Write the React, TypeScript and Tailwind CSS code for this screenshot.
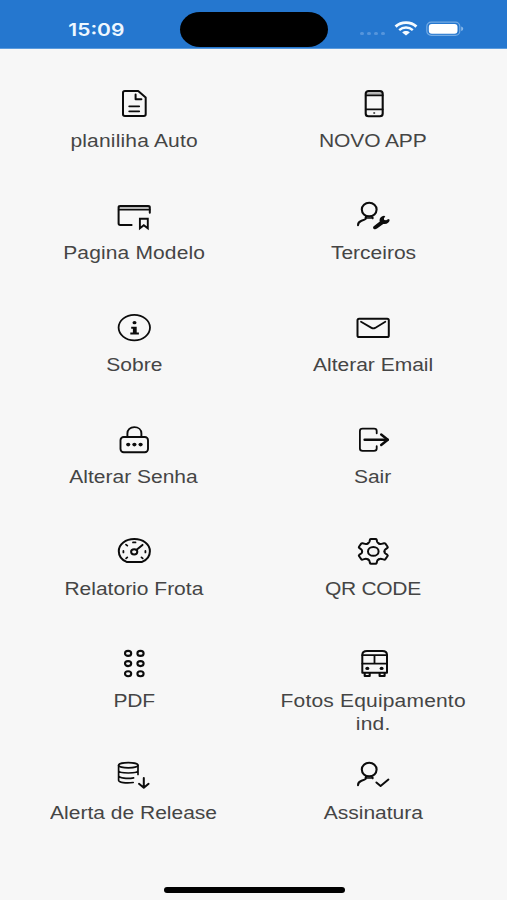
import type { ReactNode } from "react";

type MenuItem = {
  lines: string[];
  tracking?: string;
  icon: ReactNode;
};

function Icon({ children }: { children: ReactNode }) {
  return (
    <svg
      viewBox="0 0 40 36"
      className="h-9 w-10 shrink-0 overflow-visible"
      fill="none"
      stroke="#0c0c0c"
      strokeWidth={2}
      strokeLinecap="round"
      strokeLinejoin="round"
    >
      {children}
    </svg>
  );
}

function UserShape() {
  return (
    <>
      <ellipse cx="16.2" cy="11.6" rx="7.4" ry="6.8" strokeWidth={2.1} />
      <path d="M13 18.6v1.4c0 .9-.6 1.3-1.5 1.6l-3 1.1C6 23.6 5 24.8 5 27.2" />
      <path d="M12.4 19.4Q16.2 20.6 19.8 19.4V20.6" strokeWidth={1.6} />
    </>
  );
}

const gearAngles = [0, 60, 120, 180, 240, 300];

const items: MenuItem[] = [
  {
    lines: ["planiliha Auto"],
    tracking: "tracking-[0.15px]",
    icon: (
      <>
        <path d="M10.9 5H24.2L31.7 11.4V28.3Q31.7 30 29.8 30H10.9Q9 30 9 28.3V6.7Q9 5 10.9 5Z" />
        <path d="M21.6 8.5V13.3H27.4" />
        <path d="M15.2 20.3H25.2M15.2 25.3H25.2" strokeWidth={1.8} />
      </>
    ),
  },
  {
    lines: ["NOVO APP"],
    tracking: "tracking-[-0.1px]",
    icon: (
      <>
        <path d="M13.2 7.4H29.2" stroke="#b5b5b5" strokeWidth={2.6} strokeLinecap="butt" />
        <rect x="12.7" y="5" width="17" height="25.2" rx="2.8" strokeWidth={2.1} />
        <path d="M12.7 9.4H29.7M12.7 23.4H29.7" strokeWidth={1.6} />
        <ellipse cx="21.2" cy="27" rx="1.1" ry=".8" fill="#0c0c0c" stroke="none" />
      </>
    ),
  },
  {
    lines: ["Pagina Modelo"],
    tracking: "tracking-[0.12px]",
    icon: (
      <>
        <path d="M5 9.9H35.6" stroke="#b5b5b5" strokeWidth={2.6} strokeLinecap="butt" />
        <path d="M17.6 27H6.2Q4.6 27 4.6 25.6V9.4Q4.6 8 6.2 8H34.2Q35.8 8 35.8 9.4V14.8" />
        <path d="M4.6 11.8H35.8" strokeWidth={1.5} />
        <path d="M25.9 20.7H33.8V30.3L29.8 27.2L25.9 30.3Z" strokeWidth={1.9} strokeLinejoin="miter" />
      </>
    ),
  },
  {
    lines: ["Terceiros"],
    icon: (
      <>
        <UserShape />
        <path
          d="M20.7 28.2L26.8 23.6C26 20.6 27.8 18.3 31.1 17.8L32.3 18.4L30.9 20.3L31.2 21.9L33.2 22.3L35.3 21L36.7 21.8C36.5 24.8 33.7 26.5 30.3 25.9L24 30.6C21.4 32.2 18.9 30.2 20.7 28.2Z"
          fill="#0c0c0c"
          stroke="none"
        />
      </>
    ),
  },
  {
    lines: ["Sobre"],
    icon: (
      <>
        <ellipse cx="20.3" cy="17.6" rx="15.7" ry="12.7" strokeWidth={1.8} />
        <ellipse cx="20.5" cy="12.7" rx="2" ry="1.6" fill="#0c0c0c" stroke="none" />
        <path d="M17.2 16.8H22.7V22.4H24.9V24.4H16.3V22.4H18.9V18.7H17.2Z" fill="#0c0c0c" stroke="none" />
      </>
    ),
  },
  {
    lines: ["Alterar Email"],
    icon: (
      <>
        <rect x="4.5" y="8.7" width="31.3" height="18.4" rx="1.6" />
        <path d="M8 11.8L18.5 17.9Q20.3 18.9 22.1 17.9L32.3 11.8" strokeWidth={1.8} />
      </>
    ),
  },
  {
    lines: ["Alterar Senha"],
    icon: (
      <>
        <rect x="6.5" y="15" width="27.5" height="15.3" rx="3.2" strokeWidth={1.9} />
        <path d="M13.4 15V11.4C13.4 7.7 16.2 5.1 20.3 5.1C24.4 5.1 27.4 7.7 27.4 11.4V15" strokeWidth={1.9} />
        <g fill="#0c0c0c" stroke="none">
          <ellipse cx="14.2" cy="22.6" rx="2.1" ry="1.8" />
          <ellipse cx="20.4" cy="22.6" rx="2.1" ry="1.8" />
          <ellipse cx="26.6" cy="22.6" rx="2.1" ry="1.8" />
        </g>
      </>
    ),
  },
  {
    lines: ["Sair"],
    icon: (
      <>
        <path
          d="M23.7 11.3V9Q23.7 6.7 21 6.7H9.6Q6.9 6.7 6.9 9V26.5Q6.9 28.8 9.6 28.8H21Q23.7 28.8 23.7 26.5V24.2"
          strokeWidth={1.8}
        />
        <path d="M11.6 17.7H34.6" strokeWidth={2.4} />
        <path d="M28.2 12.5L34.8 17.7L28.2 22.9" strokeWidth={2.5} />
      </>
    ),
  },
  {
    lines: ["Relatorio Frota"],
    icon: (
      <>
        <path d="M12.6 27.9Q4.8 24.5 4.8 17.2C4.8 10 11.6 5.1 20.3 5.1S35.9 10 35.9 17.2Q35.9 24.5 28.1 27.9Z" />
        <ellipse cx="20.2" cy="17.8" rx="3.1" ry="2.6" />
        <path d="M22.6 15.8L28.5 10.9" />
        <path
          d="M19 8.4H21.5M12 10.6L13.3 11.6M9.4 17V18.4M12.1 24.4L13.3 23.4M31.4 17V18.4M28.7 24.4L27.5 23.4"
          strokeWidth={1.8}
        />
      </>
    ),
  },
  {
    lines: ["QR CODE"],
    tracking: "tracking-[-0.25px]",
    icon: (
      <>
        <ellipse cx="20.3" cy="17.4" rx="5.3" ry="4.4" />
        <g transform="translate(20.3 17.4) scale(1.24 1.01)">
          {gearAngles.map((angle) => (
            <path
              key={angle}
              transform={`rotate(${angle})`}
              vectorEffect="non-scaling-stroke"
              d="M-4.5 -7.8C-3.6 -8.3 -3.3 -8.6 -3.1 -9.5L-2.7 -11.6Q-2.5 -12.3 -1.8 -12.3H1.8Q2.5 -12.3 2.7 -11.6L3.1 -9.5C3.3 -8.6 3.6 -8.3 4.5 -7.8"
            />
          ))}
        </g>
      </>
    ),
  },
  {
    lines: ["PDF"],
    tracking: "tracking-[-0.2px]",
    icon: (
      <>
        {[7.4, 17.6, 27.7].map((cy) => (
          <g key={cy} strokeWidth={2.1}>
            <ellipse cx="14.1" cy={cy} rx="3.1" ry="2.5" />
            <ellipse cx="26.5" cy={cy} rx="3.1" ry="2.5" />
          </g>
        ))}
      </>
    ),
  },
  {
    lines: ["Fotos Equipamento", "ind."],
    tracking: "tracking-[0.15px]",
    icon: (
      <>
        <path d="M9.3 26.8V9Q9.3 4.9 14 4.9H29.4Q34 4.9 34 9V26.8Z" />
        <path d="M9.3 9.2H34M9.3 17.6H34M21.5 9.2V17.6" strokeWidth={1.8} />
        <path d="M11.7 27V30H16.7V27M26.6 27V30H31.6V27" strokeWidth={2.1} />
        <g fill="#0c0c0c" stroke="none">
          <ellipse cx="14.3" cy="22.4" rx="2" ry="1.6" />
          <ellipse cx="28.6" cy="22.4" rx="2" ry="1.6" />
        </g>
      </>
    ),
  },
  {
    lines: ["Alerta de Release"],
    icon: (
      <>
        <ellipse cx="14.3" cy="7.3" rx="9.7" ry="2.6" strokeWidth={1.7} />
        <path
          d="M24 7.3V16.4M4.6 7.3V22.2C4.6 24.4 12 25.6 19.2 24.5M4.6 12.6C4.6 15.8 24 15.8 24 12.6M4.6 17.6C4.6 20.4 14 21 19.6 19.9"
          strokeWidth={1.7}
        />
        <path d="M29.8 20V29.6M25 25.8L29.8 29.8L34.6 25.8" />
      </>
    ),
  },
  {
    lines: ["Assinatura"],
    icon: (
      <>
        <UserShape />
        <path d="M23.4 24.5L27.6 28L35.4 21.6" />
      </>
    ),
  },
];

function StatusBar() {
  return (
    <header className="flex h-[49px] items-start border-b border-[#5b9bdd] bg-[#2577cf]">
      <div className="flex w-[180px] justify-center pt-[18px] pl-3">
        <span className="scale-x-[1.2] font-[Inter] text-[17.5px] leading-[23px] font-semibold text-[#eef7ff]">
          15:09
        </span>
      </div>
      <div className="mt-3 h-[35px] w-[148px] rounded-[20px/17.5px] bg-black" />
      <div className="mt-[21px] ml-8 flex items-start">
        <div className="mt-[10.5px] flex gap-[3px]">
          {[0, 1, 2, 3].map((dot) => (
            <span key={dot} className="h-[3.5px] w-1 rounded-full bg-[#5595dc]" />
          ))}
        </div>
        <svg viewBox="0 0 24 15" className="ml-[9px] h-[15px] w-6" fill="none" stroke="#f4faff" strokeWidth={2.9}>
          <path d="M1.6 5.6C7.2 .3 16.8 .3 22.4 5.6" />
          <path d="M5.2 9.1C9.1 5.7 14.9 5.7 18.8 9.1" strokeWidth={2.5} />
          <path d="M8.2 11.4C10.3 9.5 13.7 9.5 15.8 11.4L12 14.6Z" fill="#f4faff" stroke="none" />
        </svg>
        <svg viewBox="0 0 38 16" className="ml-2 h-4 w-[38px]">
          <rect x=".8" y="1.1" width="33" height="13.2" rx="4.4" fill="none" stroke="#74abe4" strokeWidth="1.2" />
          <rect x="2.8" y="2.9" width="28.7" height="9.8" rx="3" fill="#fff" />
          <path d="M35.2 5.5Q37.2 6 37.2 7.7Q37.2 9.4 35.2 9.9Z" fill="#8bb9e9" />
        </svg>
      </div>
    </header>
  );
}

function MenuTile({ item }: { item: MenuItem }) {
  return (
    <button type="button" className="flex h-28 flex-col items-center">
      <Icon>{item.icon}</Icon>
      <span
        className={`mt-2 flex scale-x-[1.2] flex-col text-center text-[17.5px] leading-[23px] whitespace-nowrap text-[#454545] ${item.tracking ?? ""}`}
      >
        {item.lines.map((line) => (
          <span key={line}>{line}</span>
        ))}
      </span>
    </button>
  );
}

export default function App() {
  return (
    <div className="flex h-[900px] w-[507px] flex-col overflow-hidden bg-[#f7f7f7] font-['Liberation_Sans',Arial,sans-serif]">
      <StatusBar />
      <main className="grid grid-cols-2 px-[14.5px] pt-[37px]">
        {items.map((item) => (
          <MenuTile key={item.lines[0]} item={item} />
        ))}
      </main>
      <div className="mt-auto mb-[7.5px] ml-[163.5px] h-[5.5px] w-[181px] rounded-full bg-black" />
    </div>
  );
}
